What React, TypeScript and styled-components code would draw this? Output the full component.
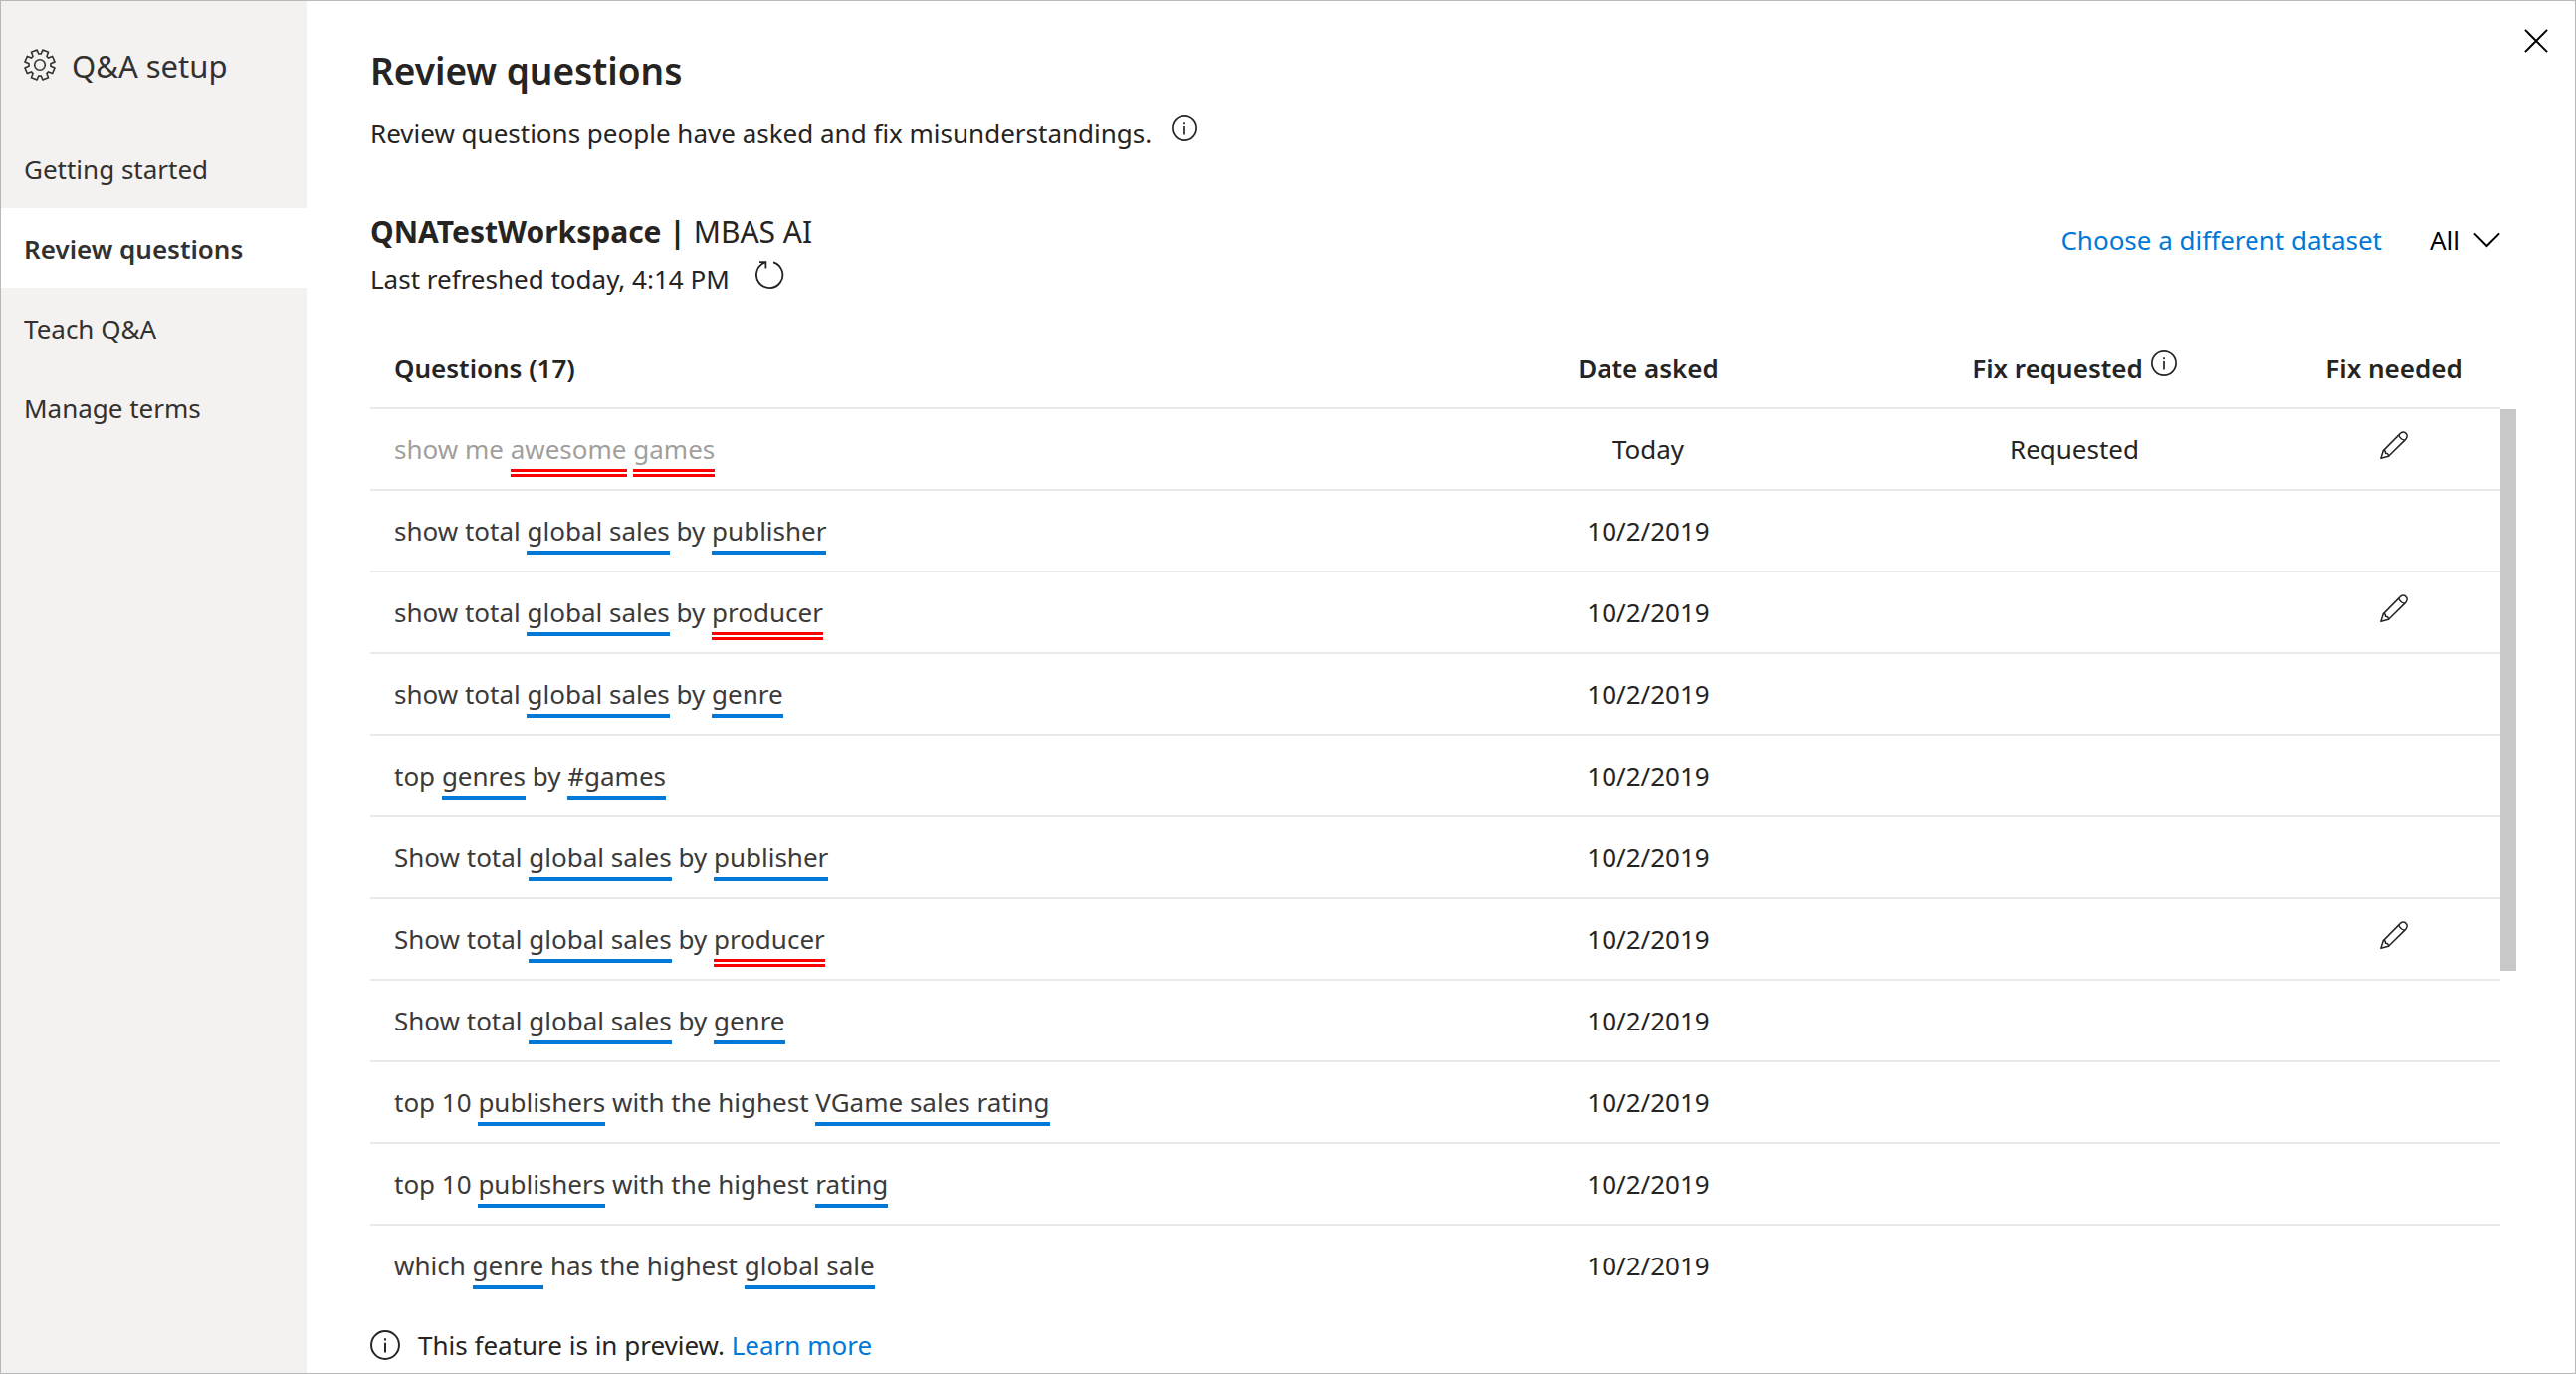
import React from "react";
import styled, { createGlobalStyle } from "styled-components";

const GlobalStyle = createGlobalStyle`
  *, *::before, *::after { box-sizing: border-box; }
  body {
    margin: 0;
    background: #ffffff;
    color: #252423;
    font-family: "Noto Sans", "Open Sans", sans-serif;
    font-size: 26px;
    line-height: 36px;
  }
  h1, h2, p { margin: 0; }
`;

/* ---------- shell ---------- */

const Dialog = styled.div`
  display: flex;
  min-height: 100vh;
  border: 1px solid #b8b8b8;
`;

const Sidebar = styled.aside`
  flex: 0 0 307px;
  background: #f3f2f0;
  color: #323130;
`;

const SidebarTitle = styled.div`
  display: flex;
  align-items: center;
  gap: 16px;
  height: 128px;
  padding: 0 23px;
  font-size: 31px;
  line-height: 40px;

  span {
    padding-top: 2px;
  }
`;

const NavItem = styled.a<{ $active?: boolean }>`
  display: flex;
  align-items: center;
  height: 80px;
  padding: 2px 23px 0;
  color: inherit;
  text-decoration: none;
  background: ${(p) => (p.$active ? "#ffffff" : "transparent")};
  font-weight: ${(p) => (p.$active ? 600 : 400)};
`;

const Main = styled.main`
  flex: 1;
  min-width: 0;
`;

const IconButton = styled.button`
  display: inline-flex;
  padding: 0;
  border: 0;
  background: none;
  color: inherit;
  cursor: pointer;
`;

/* ---------- header ---------- */

const Header = styled.header`
  display: flex;
  justify-content: space-between;
  align-items: flex-start;
  padding: 28px 27px 0 64px;
`;

const Heading = styled.div`
  padding-top: 18px;
`;

const Title = styled.h1`
  font-size: 37px;
  line-height: 48px;
  font-weight: 600;
`;

const TextWithIcon = styled.div<{ $gap: number }>`
  display: inline-flex;
  align-items: flex-start;
  gap: ${(p) => p.$gap}px;
`;

const Subtitle = styled(TextWithIcon)`
  display: flex;
  margin-top: 21px;
`;

const Content = styled.section`
  padding: 61px 59px 8px 64px;
`;

const DatasetBar = styled.div`
  display: flex;
  justify-content: space-between;
  align-items: flex-start;
  padding-right: 16px;
`;

const DatasetName = styled.h2`
  margin-bottom: 9px;
  font-size: 30px;
  line-height: 40px;
  font-weight: 400;
`;

const DatasetActions = styled.div`
  display: flex;
  gap: 48px;
  padding-top: 10px;
`;

const Link = styled.a`
  color: #0078d7;
  text-decoration: none;
`;

const FilterField = styled.label`
  display: grid;
  align-items: center;
  justify-items: end;
  color: #000000;

  select,
  svg {
    grid-area: 1 / 1;
  }
  svg {
    pointer-events: none;
  }
`;

const FilterSelect = styled.select`
  appearance: none;
  padding: 0 40px 0 0;
  border: 0;
  background: none;
  color: inherit;
  font: inherit;
`;

/* ---------- table ---------- */

const TableArea = styled.div`
  display: grid;
  grid-template-columns: 1fr 16px;
  margin-top: 33px;
`;

const Table = styled.table`
  width: 100%;
  table-layout: fixed;
  border-collapse: separate;
  border-spacing: 0;
`;

const HeadCell = styled.th<{ $width: number; $left?: boolean }>`
  width: ${(p) => p.$width}%;
  height: 80px;
  padding: 0 ${(p) => (p.$left ? 24 : 0)}px;
  border-bottom: 2px solid #eaeaea;
  font-weight: 600;
  text-align: ${(p) => (p.$left ? "left" : "center")};
  vertical-align: middle;
`;

const Row = styled.tr<{ $muted?: boolean }>`
  td:first-child {
    padding-left: 24px;
    text-align: left;
    color: ${(p) => (p.$muted ? "#a19f9d" : "#3b3a39")};
  }
  &:last-child td {
    height: 80px;
    border-bottom: 0;
  }
`;

const Cell = styled.td`
  height: 82px;
  padding: 0;
  border-bottom: 2px solid #eaeaea;
  text-align: center;
  vertical-align: middle;
`;

const EditButton = styled(IconButton)`
  padding-bottom: 10px;
  vertical-align: middle;
`;

const Term = styled.span<{ $kind: "known" | "unknown" }>`
  padding-bottom: 2px;
  border-bottom: ${(p) => (p.$kind === "known" ? "4px solid #0078d7" : "8px double #ff0000")};
`;

const ScrollTrack = styled.div`
  padding-top: 80px;
`;

const ScrollThumb = styled.div`
  height: 62.7%;
  background: #c8c8c8;
`;

const Footer = styled.footer`
  display: flex;
  align-items: center;
  gap: 18px;
  margin-top: 20px;
  line-height: 40px;
`;

/* ---------- icons ---------- */

const polar = (r: number, deg: number) => {
  const a = (deg * Math.PI) / 180;
  return `${(16 + r * Math.sin(a)).toFixed(2)} ${(16 - r * Math.cos(a)).toFixed(2)}`;
};

const gearPath =
  "M" +
  Array.from({ length: 8 }, (_, i) => i * 45)
    .map((a) => [polar(11, a - 6), polar(11, a + 6), polar(15.3, a + 11), polar(15.3, a + 34)].join("L"))
    .join("L") +
  "Z";

const GearIcon = () => (
  <svg width="32" height="32" viewBox="0 0 32 32" fill="none" stroke="currentColor" strokeWidth="1.6" strokeLinejoin="round" aria-hidden="true">
    <path d={gearPath} />
    <circle cx="16" cy="16" r="5.3" />
  </svg>
);

const InfoIcon = ({ size = 26 }: { size?: number }) => (
  <svg width={size} height={size} viewBox="0 0 26 26" fill="none" stroke="currentColor" strokeWidth="1.7" aria-hidden="true">
    <circle cx="13" cy="13" r="12.1" />
    <path d="M13 7.2v2M13 11v8.4" />
  </svg>
);

const RefreshIcon = () => (
  <svg width="29" height="29" viewBox="0 0 29 29" fill="none" stroke="currentColor" strokeWidth="1.8" aria-hidden="true">
    <path d="M18 1.3A13.2 13.2 0 1 1 10.3 1.3" />
    <path d="M4 1.2h6.4v6.2" />
  </svg>
);

const ChevronIcon = () => (
  <svg width="27" height="16" viewBox="0 0 27 16" fill="none" stroke="currentColor" strokeWidth="2" aria-hidden="true">
    <path d="M.9 1.4 13.5 14 26.1 1.4" />
  </svg>
);

const CloseIcon = () => (
  <svg width="24" height="24" viewBox="0 0 24 24" fill="none" stroke="#000000" strokeWidth="2" aria-hidden="true">
    <path d="M.9.9l22.2 22.2M23.1.9.9 23.1" />
  </svg>
);

const PencilIcon = () => (
  <svg width="28" height="28" viewBox="0 0 28 28" fill="none" stroke="currentColor" strokeWidth="1.5" strokeLinejoin="round" aria-hidden="true">
    <path d="M.9 27.2 3.3 19.6 19.6 3.1C21.2 1.2 23.5.2 25.6 1.8 28 3.8 27.4 6.6 25.4 8.6L8.5 25.2Z" />
    <path d="M18.8 3.9C19.5 6.5 21.8 8.6 24.6 9.3M3.3 19.6C5.2 19.4 5.6 20.6 5.5 22.3 7.5 22.2 8.5 23.2 8.5 25.2" />
  </svg>
);

/* ---------- data ---------- */

type Question = { text: string; date: string; status?: string; fix?: boolean };

// Terms wrapped in [brackets] are recognised, terms wrapped in {braces} are not.
const questions: Question[] = [
  { text: "show me {awesome} {games}", date: "Today", status: "Requested", fix: true },
  { text: "show total [global sales] by [publisher]", date: "10/2/2019" },
  { text: "show total [global sales] by {producer}", date: "10/2/2019", fix: true },
  { text: "show total [global sales] by [genre]", date: "10/2/2019" },
  { text: "top [genres] by [#games]", date: "10/2/2019" },
  { text: "Show total [global sales] by [publisher]", date: "10/2/2019" },
  { text: "Show total [global sales] by {producer}", date: "10/2/2019", fix: true },
  { text: "Show total [global sales] by [genre]", date: "10/2/2019" },
  { text: "top 10 [publishers] with the highest [VGame sales rating]", date: "10/2/2019" },
  { text: "top 10 [publishers] with the highest [rating]", date: "10/2/2019" },
  { text: "which [genre] has the highest [global sale]", date: "10/2/2019" },
];

const QuestionText = ({ text }: { text: string }) => (
  <>
    {text.split(/(\[[^\]]+\]|\{[^}]+\})/).map((part, i) => {
      if (part.startsWith("[")) return <Term key={i} $kind="known">{part.slice(1, -1)}</Term>;
      if (part.startsWith("{")) return <Term key={i} $kind="unknown">{part.slice(1, -1)}</Term>;
      return part;
    })}
  </>
);

const navItems = ["Getting started", "Review questions", "Teach Q&A", "Manage terms"];

export default function App() {
  return (
    <>
      <GlobalStyle />
      <Dialog>
        <Sidebar>
          <SidebarTitle>
            <GearIcon />
            <span>Q&amp;A setup</span>
          </SidebarTitle>
          <nav>
            {navItems.map((item) => (
              <NavItem key={item} href="#" $active={item === "Review questions"}>
                {item}
              </NavItem>
            ))}
          </nav>
        </Sidebar>
        <Main>
          <Header>
            <Heading>
              <Title>Review questions</Title>
              <Subtitle $gap={20}>
                <p>Review questions people have asked and fix misunderstandings.</p>
                <InfoIcon />
              </Subtitle>
            </Heading>
            <IconButton aria-label="Close">
              <CloseIcon />
            </IconButton>
          </Header>
          <Content>
            <DatasetBar>
              <div>
                <DatasetName>
                  <b>QNATestWorkspace |</b> MBAS AI
                </DatasetName>
                <TextWithIcon $gap={26}>
                  <p>Last refreshed today, 4:14 PM</p>
                  <IconButton aria-label="Refresh">
                    <RefreshIcon />
                  </IconButton>
                </TextWithIcon>
              </div>
              <DatasetActions>
                <Link href="#">Choose a different dataset</Link>
                <FilterField>
                  <FilterSelect aria-label="Filter questions" defaultValue="All">
                    <option>All</option>
                  </FilterSelect>
                  <ChevronIcon />
                </FilterField>
              </DatasetActions>
            </DatasetBar>
            <TableArea>
              <Table>
                <thead>
                  <tr>
                    <HeadCell $width={50} $left>Questions (17)</HeadCell>
                    <HeadCell $width={20}>Date asked</HeadCell>
                    <HeadCell $width={20}>
                      <TextWithIcon $gap={8}>
                        Fix requested
                        <InfoIcon />
                      </TextWithIcon>
                    </HeadCell>
                    <HeadCell $width={10}>Fix needed</HeadCell>
                  </tr>
                </thead>
                <tbody>
                  {questions.map((q) => (
                    <Row key={q.text} $muted={q.status === "Requested"}>
                      <Cell><QuestionText text={q.text} /></Cell>
                      <Cell>{q.date}</Cell>
                      <Cell>{q.status}</Cell>
                      <Cell>
                        {q.fix && (
                          <EditButton aria-label={`Fix "${q.text.replace(/[[\]{}]/g, "")}"`}>
                            <PencilIcon />
                          </EditButton>
                        )}
                      </Cell>
                    </Row>
                  ))}
                </tbody>
              </Table>
              <ScrollTrack>
                <ScrollThumb />
              </ScrollTrack>
            </TableArea>
            <Footer>
              <InfoIcon size={30} />
              <p>
                This feature is in preview. <Link href="#">Learn more</Link>
              </p>
            </Footer>
          </Content>
        </Main>
      </Dialog>
    </>
  );
}
